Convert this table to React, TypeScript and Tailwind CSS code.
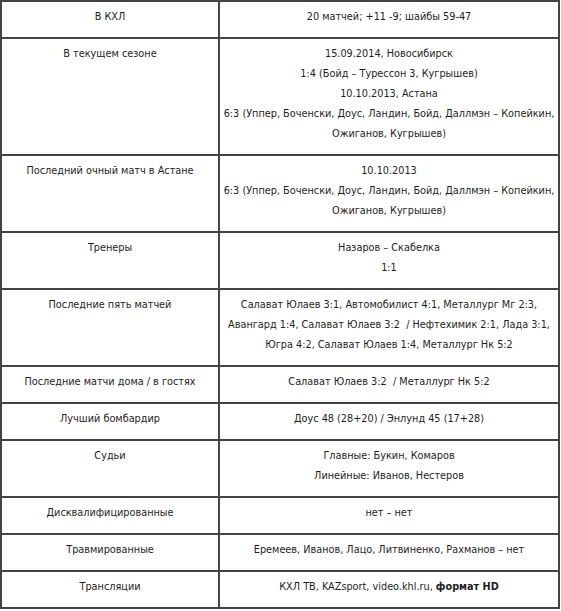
import type { ReactNode } from "react";

type Row = {
  label: string;
  lines: ReactNode[];
};

const ROWS: Row[] = [
  { label: "В КХЛ", lines: ["20 матчей; +11 -9; шайбы 59-47"] },
  {
    label: "В текущем сезоне",
    lines: [
      "15.09.2014, Новосибирск",
      "1:4 (Бойд – Турессон 3, Кугрышев)",
      "10.10.2013, Астана",
      "6:3 (Уппер, Боченски, Доус, Ландин, Бойд, Даллмэн – Копейкин,",
      "Ожиганов, Кугрышев)",
    ],
  },
  {
    label: "Последний очный матч в Астане",
    lines: [
      "10.10.2013",
      "6:3 (Уппер, Боченски, Доус, Ландин, Бойд, Даллмэн – Копейкин,",
      "Ожиганов, Кугрышев)",
    ],
  },
  { label: "Тренеры", lines: ["Назаров – Скабелка", "1:1"] },
  {
    label: "Последние пять матчей",
    lines: [
      "Салават Юлаев 3:1, Автомобилист 4:1, Металлург Мг 2:3,",
      "Авангард 1:4, Салават Юлаев 3:2 \u00a0/ Нефтехимик 2:1, Лада 3:1,",
      "Югра 4:2, Салават Юлаев 1:4, Металлург Нк 5:2",
    ],
  },
  {
    label: "Последние матчи дома / в гостях",
    lines: ["Салават Юлаев 3:2 \u00a0/ Металлург Нк 5:2"],
  },
  { label: "Лучший бомбардир", lines: ["Доус 48 (28+20) / Энлунд 45 (17+28)"] },
  {
    label: "Судьи",
    lines: ["Главные: Букин, Комаров", "Линейные: Иванов, Нестеров"],
  },
  { label: "Дисквалифицированные", lines: ["нет – нет"] },
  {
    label: "Травмированные",
    lines: ["Еремеев, Иванов, Лацо, Литвиненко, Рахманов – нет"],
  },
  {
    label: "Трансляции",
    lines: [
      <>
        КХЛ ТВ, KAZsport, video.khl.ru, <b className="font-bold">формат HD</b>
      </>,
    ],
  },
];

export default function App() {
  return (
    <div className="bg-white">
      <table
        className="w-[560px] table-fixed border-collapse text-[10.8px] leading-[20px] text-[#1e1e1e]"
        style={{ fontFamily: '"DejaVu Sans Condensed", "Liberation Sans", sans-serif' }}
      >
        <colgroup>
          <col className="w-[218px]" />
          <col />
        </colgroup>
        <tbody>
          {ROWS.map((row) => (
            <tr key={row.label}>
              {/* label column */}
              <td className="border-2 border-[#444] px-2 pt-[5px] pb-[10px] text-center align-top">
                {row.label}
              </td>
              <td className="border-2 border-[#444] px-0 pt-[5px] pb-[10px] text-center align-top">
                {row.lines.map((line, i) => (
                  <div key={i} className="whitespace-nowrap">
                    {line}
                  </div>
                ))}
              </td>
            </tr>
          ))}
        </tbody>
      </table>
    </div>
  );
}
